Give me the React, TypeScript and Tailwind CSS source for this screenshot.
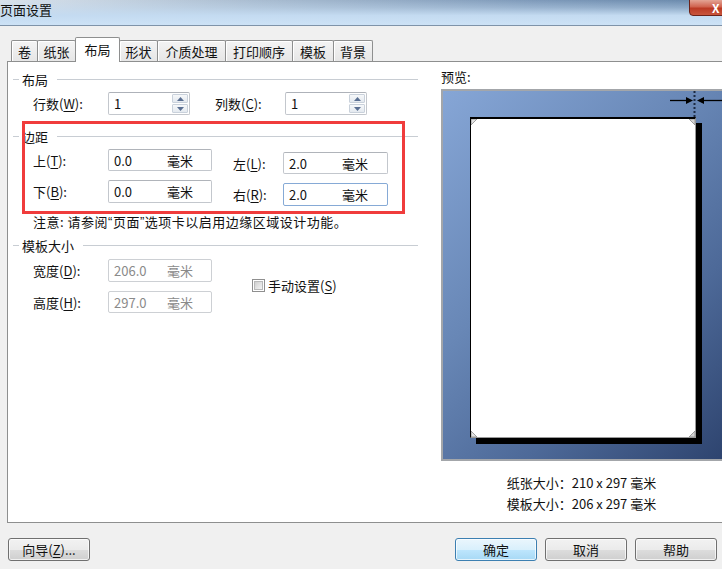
import React from "react";

const U = ({ c }: { c: string }) => <span className="underline underline-offset-[2px]">{c}</span>;

function Lbl({ t, k, w }: { t: string; k: string; w: string }) {
  return (
    <span className={`${w} shrink-0`}>
      {t}(<U c={k} />):
    </span>
  );
}

function GroupHeader({ title, mt }: { title: string; mt: string }) {
  return (
    <div className={`flex h-[22px] items-center pl-[5px] pr-[23px] ${mt}`}>
      <div className="h-px w-[6px] bg-[#c8cdd3]" />
      <span className="ml-[3px]">{title}</span>
      <div className="ml-[9px] h-px flex-1 bg-[#c8cdd3]" />
    </div>
  );
}

function Spin({ v }: { v: string }) {
  return (
    <div className="flex h-[23px] w-[82px] rounded-[2px] border border-[#c3c7cd] border-t-[#aeb2b9] bg-white">
      <div className="flex flex-1 items-center pl-[5px]">{v}</div>
      <div className="my-[1px] mr-[1px] flex w-[16px] flex-col gap-px">
        <div className="flex flex-1 items-center justify-center rounded-[1px] border border-[#c9d1db] bg-[linear-gradient(180deg,#f6f8fa,#e4e9ef)]">
          <svg width="7" height="4" viewBox="0 0 7 4">
            <polygon points="3.5,0 7,4 0,4" fill="#5a6f92" />
          </svg>
        </div>
        <div className="flex flex-1 items-center justify-center rounded-[1px] border border-[#c9d1db] bg-[linear-gradient(180deg,#f6f8fa,#e4e9ef)]">
          <svg width="7" height="4" viewBox="0 0 7 4">
            <polygon points="0,0 7,0 3.5,4" fill="#5a6f92" />
          </svg>
        </div>
      </div>
    </div>
  );
}

function UnitBox({ v, w, disabled, focused }: { v: string; w: string; disabled?: boolean; focused?: boolean }) {
  const b = focused ? "border-[#86aad6]" : disabled ? "border-[#cdd0d4]" : "border-[#c3c7cd] border-t-[#b0b4ba]";
  const c = disabled ? "text-[#8a8a8a]" : "";
  return (
    <div className={`flex h-full ${w} items-center rounded-[2px] border bg-white pl-[5px] ${b} ${c}`}>
      <span className="w-[53px]">{v}</span>
      <span>毫米</span>
    </div>
  );
}

function Tab({ t, w, sel }: { t: string; w: string; sel?: boolean }) {
  if (sel) {
    return (
      <div
        className={`relative z-10 -mb-px ml-[-1px] flex h-[25px] ${w} items-start justify-center rounded-t-[2px] border border-b-0 border-[#8e8f8f] bg-white pt-[5px]`}
      >
        {t}
      </div>
    );
  }
  return (
    <div
      className={`ml-[-1px] flex h-[21px] ${w} items-center justify-center rounded-t-[2px] border border-b-0 border-[#8e8f8f] bg-[linear-gradient(180deg,#f4f4f4,#e6e6e6)] shadow-[inset_1px_1px_0_#fff]`}
    >
      {t}
    </div>
  );
}

function Btn({ t, def }: { t: React.ReactNode; def?: boolean }) {
  const s = def
    ? "border-[#3c7fb1] bg-[linear-gradient(180deg,#eaf6fd_0%,#d9f0fc_50%,#bee6fd_51%,#a7d9f5_100%)]"
    : "border-[#707070] bg-[linear-gradient(180deg,#f2f2f2_0%,#ebebeb_50%,#dddddd_51%,#cfcfcf_100%)]";
  return (
    <div className={`flex h-[23px] w-[82px] items-center justify-center rounded-[3px] border ${s} shadow-[inset_0_0_0_1px_rgba(255,255,255,0.7)]`}>
      {t}
    </div>
  );
}

const Q = ({ c }: { c: string }) => <span className="font-['Liberation_Sans',sans-serif]">{c}</span>;

export default function App() {
  return (
    <div className="relative h-[569px] w-[722px] overflow-hidden bg-[#f0f0f0] font-['Noto_Sans_CJK_SC',sans-serif] text-[13px] leading-none text-[#111]">
      {/* title bar */}
      <div className="relative h-[26px] border-b border-[#7f93a9] bg-[linear-gradient(180deg,rgba(196,219,241,0)_0%,rgba(196,219,241,0.4)_30%,#c4dbf1_62%,#cde2f6_100%),linear-gradient(90deg,#d9e2eb_0%,#aabdd1_35%,#7c98b8_75%,#6787aa_100%)]">
        <div className="pt-[3px] text-[13px] leading-[14px]">页面设置</div>
        <div className="absolute left-[689px] top-[-1px] flex h-[17px] w-[43px] items-center rounded-b-[4px] border border-[#6b2219] bg-[linear-gradient(180deg,#e3a495_0%,#d0634f_45%,#bb3a25_55%,#c8553c_100%)] pl-[22px] text-[12px] font-bold text-white">
          X
        </div>
      </div>

      {/* tabs */}
      <div className="mt-[11px] flex h-[24px] items-end pl-[12px]">
        <Tab t="卷" w="w-[27px]" />
        <Tab t="纸张" w="w-[39px]" />
        <Tab t="布局" w="w-[45px]" sel />
        <Tab t="形状" w="w-[39px]" />
        <Tab t="介质处理" w="w-[69px]" />
        <Tab t="打印顺序" w="w-[68px]" />
        <Tab t="模板" w="w-[42px]" />
        <Tab t="背景" w="w-[40px]" />
      </div>

      {/* panel */}
      <div className="ml-[7px] flex h-[462px] w-[730px] border border-[#8e8f8f] bg-white">
        {/* left column */}
        <div className="flex w-[433px] flex-col">
          <GroupHeader title="布局" mt="mt-[6px]" />
          <div className="mt-[2px] flex h-[23px] items-center pl-[25px]">
            <Lbl t="行数" k="W" w="w-[75px]" />
            <Spin v="1" />
            <span className="ml-[25px] w-[70px] shrink-0">
              列数(<U c="C" />):
            </span>
            <Spin v="1" />
          </div>

          <GroupHeader title="边距" mt="mt-[10px]" />
          <div className="mt-[2px] flex h-[25px] items-start pl-[25px]">
            <div className="flex h-[22px] items-center">
              <Lbl t="上" k="T" w="w-[75px]" />
              <UnitBox v="0.0" w="w-[104px]" />
            </div>
            <div className="ml-[21px] mt-[3px] flex h-[22px] items-center">
              <Lbl t="左" k="L" w="w-[50px]" />
              <UnitBox v="2.0" w="w-[105px]" />
            </div>
          </div>
          <div className="mt-[6px] flex h-[26px] items-start pl-[25px]">
            <div className="flex h-[23px] items-center">
              <Lbl t="下" k="B" w="w-[75px]" />
              <UnitBox v="0.0" w="w-[104px]" />
            </div>
            <div className="ml-[21px] mt-[3px] flex h-[23px] items-center">
              <Lbl t="右" k="R" w="w-[50px]" />
              <UnitBox v="2.0" w="w-[105px]" focused />
            </div>
          </div>
          <div className="mt-[7px] flex h-[16px] items-center pl-[25px] tracking-[0.5px]">
            注意: 请参阅<Q c="“" />页面<Q c="”" />选项卡以启用边缘区域设计功能。
          </div>

          <GroupHeader title="模板大小" mt="mt-[5px]" />
          <div className="flex items-center">
            <div className="flex flex-col pl-[25px]">
              <div className="mt-[3px] flex h-[23px] items-center">
                <Lbl t="宽度" k="D" w="w-[75px]" />
                <UnitBox v="206.0" w="w-[104px]" disabled />
              </div>
              <div className="mt-[9px] flex h-[22px] items-center">
                <Lbl t="高度" k="H" w="w-[75px]" />
                <UnitBox v="297.0" w="w-[104px]" disabled />
              </div>
            </div>
            <div className="ml-[40px] mt-[2px] flex items-center">
              <div className="flex h-[13px] w-[13px] items-center justify-center border border-[#8f8f8f] bg-white">
                <div className="h-[9px] w-[9px] border border-[#b9b9b9] bg-[linear-gradient(135deg,#cfcfcf,#f4f4f4)]" />
              </div>
              <span className="ml-[3px]">
                手动设置(<U c="S" />)
              </span>
            </div>
          </div>
        </div>

        {/* right column */}
        <div className="flex w-[281px] flex-col">
          <div className="mt-[6px] flex h-[16px] items-center">预览:</div>
          <div className="relative mt-[5px] h-[372px] w-[283px] border-2 border-[#a3a6aa] bg-[linear-gradient(135deg,#86a6d6_0%,#6887b6_40%,#4d6998_70%,#2e446f_100%)]">
            <div className="relative ml-[27px] mt-[26px] h-[321px] w-[226px] border-l border-r border-b border-t-2 border-black border-r-[#9a9a9a] border-b-[#9a9a9a] bg-white shadow-[6px_6px_0_0_#000]">
              <svg className="absolute left-0 top-0" width="7" height="7" viewBox="0 0 7 7">
                <polygon points="0,0 6,0 0,6" fill="#e2e2e2" stroke="#8a8a8a" strokeWidth="0.8" />
              </svg>
              <svg className="absolute right-0 top-0" width="7" height="7" viewBox="0 0 7 7">
                <polygon points="1,0 7,0 7,6" fill="#d4d4d4" stroke="#8a8a8a" strokeWidth="0.8" />
              </svg>
              <svg className="absolute bottom-0 left-0" width="7" height="7" viewBox="0 0 7 7">
                <polygon points="0,1 0,7 6,7" fill="#e2e2e2" stroke="#8a8a8a" strokeWidth="0.8" />
              </svg>
              <svg className="absolute bottom-0 right-0" width="7" height="7" viewBox="0 0 7 7">
                <polygon points="7,1 7,7 1,7" fill="#d4d4d4" stroke="#8a8a8a" strokeWidth="0.8" />
              </svg>
            </div>
            <svg className="absolute left-[226px] top-0" width="55" height="28" viewBox="0 0 55 28">
              <line x1="1" y1="9.5" x2="19" y2="9.5" stroke="#000" strokeWidth="1.3" />
              <polygon points="17,6 24,9.5 17,13" fill="#000" />
              <line x1="25.5" y1="0" x2="25.5" y2="28" stroke="#1d2a42" strokeWidth="2" strokeDasharray="2 2" />
              <polygon points="28,9.5 35,6 35,13" fill="#000" />
              <line x1="34" y1="9.5" x2="55" y2="9.5" stroke="#000" strokeWidth="1.3" />
            </svg>
          </div>
          <div className="mt-[13px] flex h-[16px] items-center justify-center">纸张大小：210 x 297 毫米</div>
          <div className="mt-[5px] flex h-[16px] items-center justify-center">模板大小：206 x 297 毫米</div>
        </div>
      </div>

      {/* buttons */}
      <div className="mt-[15px] flex h-[23px] pl-[8px]">
        <Btn
          t={
            <span>
              向导(<U c="Z" />)...
            </span>
          }
        />
        <div className="ml-[365px] flex gap-[8px]">
          <Btn t="确定" def />
          <Btn t="取消" />
          <Btn t="帮助" />
        </div>
      </div>

      {/* red annotation box */}
      <div className="absolute left-[22px] top-[121px] h-[93px] w-[383px] border-[3px] border-[#f03c3c]" />
    </div>
  );
}
